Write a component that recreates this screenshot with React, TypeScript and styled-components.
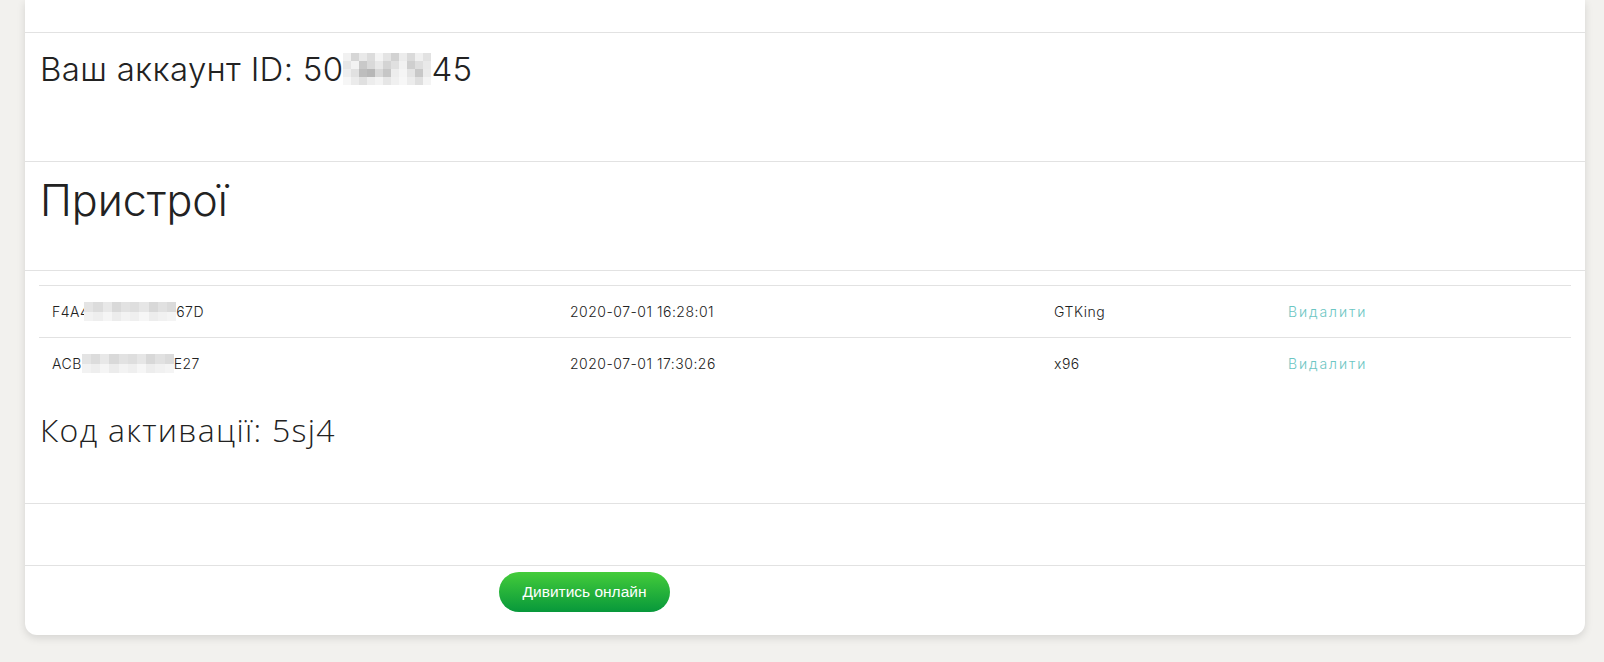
import React from 'react'
import styled, { createGlobalStyle } from 'styled-components'

const GlobalStyle = createGlobalStyle`
  html, body {
    margin: 0;
    padding: 0;
    background: #f2f1ee;
  }
  body {
    font-family: Inter, "Noto Sans", sans-serif;
    color: #222;
  }
`

interface Device {
  prefix: string
  suffix: string
  added: string
  model: string
}

const devices: Device[] = [
  { prefix: 'F4A4', suffix: '67D', added: '2020-07-01 16:28:01', model: 'GTKing' },
  { prefix: 'ACB', suffix: 'E27', added: '2020-07-01 17:30:26', model: 'x96' },
]

// grey shades for the pixelated parts of the IDs
const idShades = [
  '#f1f1f1', '#d6d6d6', '#e9e9e9', '#dcdcdc', '#f4f4f4', '#e4e4e4', '#d2d2d2', '#ececec', '#dadada', '#f0f0f0', '#e2e2e2',
  '#e6e6e6', '#f3f3f3', '#c9c9c9', '#d9d9d9', '#e8e8e8', '#d4d4d4', '#e0e0e0', '#f2f2f2', '#cfcfcf', '#dedede', '#e9e9e9',
  '#eeeeee', '#e1e1e1', '#bdbdbd', '#b7b7b7', '#d8d8d8', '#c6c6c6', '#ededed', '#f5f5f5', '#e4e4e4', '#c8c8c8', '#ebebeb',
  '#f6f6f6', '#ebebeb', '#e0e0e0', '#ededed', '#f3f3f3', '#e6e6e6', '#f0f0f0', '#f7f7f7', '#ececec', '#dfdfdf', '#f4f4f4',
]

const macShades = [
  '#e4e4e4', '#dcdcdc', '#e8e8e8', '#d9d9d9', '#e2e2e2', '#dedede', '#e6e6e6', '#d8d8d8', '#e1e1e1', '#dbdbdb',
  '#f2f2f2', '#eeeeee', '#f5f5f5', '#ececec', '#f3f3f3', '#efefef', '#f6f6f6', '#ededed', '#f1f1f1', '#f4f4f4',
]

const Mosaic: React.FC<{ shades: string[]; cols: number; cell: number; overlap?: number }> = ({
  shades,
  cols,
  cell,
  overlap = 0,
}) => (
  <StyledMosaic cols={cols} cell={cell} overlap={overlap}>
    {shades.map((s, i) => (
      <StyledMosaicCell key={i} shade={s} />
    ))}
  </StyledMosaic>
)

const App: React.FC = () => {
  return (
    <>
      <GlobalStyle />
      <StyledPage>
        <StyledCard>
          <StyledTopStrip />
          <StyledSection height={129}>
            <StyledAccountTitle>
              Ваш аккаунт ID: 50
              <Mosaic shades={idShades} cols={11} cell={8} />
              45
            </StyledAccountTitle>
          </StyledSection>
          <StyledSection height={109}>
            <StyledDevicesTitle>Пристрої</StyledDevicesTitle>
          </StyledSection>
          <StyledDevicesBody>
            <StyledTable>
              {devices.map((d, i) => (
                <StyledRow key={d.prefix}>
                  <StyledCell>
                    {d.prefix}
                    <Mosaic shades={macShades} cols={10} cell={9.2} overlap={i === 0 ? 5 : 0} />
                    {d.suffix}
                  </StyledCell>
                  <StyledCell>{d.added}</StyledCell>
                  <StyledCell>{d.model}</StyledCell>
                  <StyledCell>
                    <StyledDeleteLink href="#">Видалити</StyledDeleteLink>
                  </StyledCell>
                </StyledRow>
              ))}
            </StyledTable>
            <StyledCodeTitle>Код активації: 5sj4</StyledCodeTitle>
          </StyledDevicesBody>
          <StyledSection height={62} />
          <StyledFooter>
            <StyledWatchButton type="button">Дивитись онлайн</StyledWatchButton>
          </StyledFooter>
        </StyledCard>
      </StyledPage>
    </>
  )
}

const StyledPage = styled.div`
  padding: 0 19px 28px 25px;
`

const StyledCard = styled.div`
  background: #fff;
  border-radius: 0 0 12px 12px;
  box-shadow: 0 3px 8px rgba(0, 0, 0, 0.12);
`

const StyledTopStrip = styled.div`
  height: 32px;
  border-bottom: 1px solid #e2e2e2;
`

const StyledSection = styled.div<{ height: number }>`
  box-sizing: border-box;
  height: ${(props) => props.height}px;
  padding: 0 15px;
  border-bottom: 1px solid #e2e2e2;
`

const StyledMosaic = styled.span<{ cols: number; cell: number; overlap: number }>`
  display: inline-grid;
  grid-template-columns: repeat(${(props) => props.cols}, ${(props) => props.cell}px);
  grid-auto-rows: ${(props) => props.cell}px;
  margin-left: -${(props) => props.overlap}px;
  vertical-align: middle;
`

const StyledMosaicCell = styled.span<{ shade: string }>`
  background: ${(props) => props.shade};
`

const StyledAccountTitle = styled.h3`
  display: flex;
  align-items: center;
  margin: 0;
  padding-top: 16px;
  font-family: Inter, sans-serif;
  font-size: 33px;
  font-weight: 300;
  letter-spacing: 0.3px;
  line-height: 40px;
  color: #222;
`

const StyledDevicesTitle = styled.h2`
  margin: 0;
  padding-top: 13px;
  font-family: Inter, sans-serif;
  font-size: 43px;
  font-weight: 300;
  line-height: 50px;
  color: #222;
`

const StyledDevicesBody = styled.div`
  padding: 14px 14px 0;
  border-bottom: 1px solid #e2e2e2;
  height: 233px;
  box-sizing: border-box;
`

const StyledTable = styled.div`
  display: grid;
  grid-template-columns: 518px 484px 234px 1fr;
`

const StyledRow = styled.div`
  display: contents;
  & > div {
    border-top: 1px solid #e2e2e2;
  }
`

const StyledCell = styled.div`
  height: 51px;
  display: flex;
  align-items: center;
  padding: 0 13px;
  font-family: Inter, sans-serif;
  font-size: 14px;
  font-weight: 300;
  letter-spacing: 0.5px;
  color: #222;
`

const StyledDeleteLink = styled.a`
  color: #6cc6c3;
  letter-spacing: 1.9px;
  text-decoration: none;
`

const StyledCodeTitle = styled.h3`
  margin: 0;
  padding: 21px 1px 0;
  font-family: "Open Sans", sans-serif;
  font-size: 32px;
  font-weight: 300;
  letter-spacing: 1.3px;
  line-height: 40px;
  color: #222;
`

const StyledFooter = styled.div`
  height: 69px;
  padding: 6px 0 0 474px;
  box-sizing: border-box;
`

const StyledWatchButton = styled.button`
  width: 171px;
  height: 40px;
  border: none;
  border-radius: 20px;
  background: linear-gradient(to bottom, #44cc3a, #07983b);
  color: #fff;
  font-family: "Liberation Sans", Arial, sans-serif;
  font-size: 15.5px;
  font-weight: 400;
  cursor: pointer;
`

export default App
